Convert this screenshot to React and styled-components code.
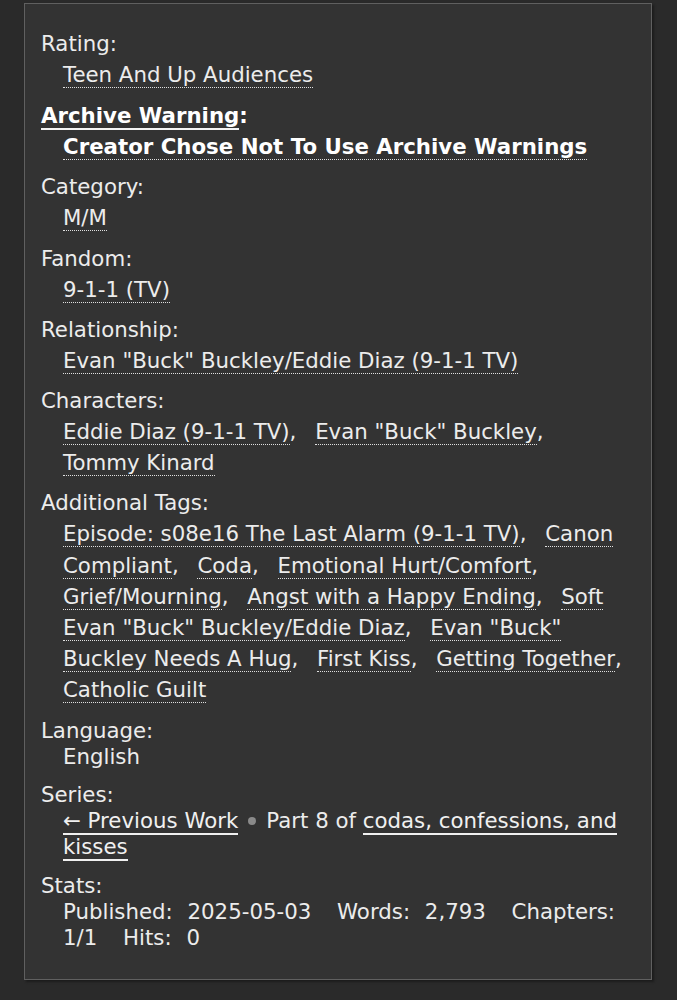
import React from "react";
import styled, { createGlobalStyle } from "styled-components";

const Global = createGlobalStyle`
  html, body { margin: 0; padding: 0; background: #2a2a2a; }
  body { font-family: "DejaVu Sans", Verdana, sans-serif; font-size: 21.3px; color: #ececec; }
`;

const Page = styled.div`
  padding: 3px 24px 22px 24px;
`;

const Panel = styled.dl`
  margin: 0;
  width: 628px;
  box-sizing: border-box;
  background: #333333;
  border: 1px solid #606060;
  box-shadow: 2px 2px 2px #1c1c1c;
  padding: 27px 16px 28px 16px;
  display: flex;
  flex-direction: column;
  gap: 12px;
`;

const Group = styled.div`
  margin-top: ${(p) => p.$extra || 0}px;
`;

const Label = styled.dt`
  line-height: 26px;
  font-weight: ${(p) => (p.$bold ? 700 : 400)};
  color: ${(p) => (p.$bold ? "#ffffff" : "#ececec")};
`;

const LabelText = styled.span`
  border-bottom: 2px solid #f4f4f4;
`;

const Value = styled.dd`
  margin: 0 0 0 22px;
  padding-top: ${(p) => (p.$tags ? "2px" : "0")};
  line-height: ${(p) => (p.$tags ? "31.2px" : "26px")};
  font-weight: ${(p) => (p.$bold ? 700 : 400)};
  color: ${(p) => (p.$bold ? "#ffffff" : "#ececec")};
`;

const Item = styled.span`
  margin-right: 12px;
`;

const TagLink = styled.a`
  color: inherit;
  text-decoration: none;
  border-bottom: 1px dotted #e0e0e0;
`;

const SeriesLink = styled.a`
  color: #f0f0f0;
  text-decoration: none;
  border-bottom: 2px solid #f0f0f0;
`;

const Dot = styled.span`
  display: inline-block;
  width: 8px;
  height: 8px;
  border-radius: 50%;
  background: #8a8a8a;
  margin: 0 10px 0 10px;
  vertical-align: 3px;
`;

const StatName = styled.span`
  margin-right: 8px;
`;

const StatVal = styled.span`
  margin-right: 19px;
`;

function Tags({ items }) {
  return items.map((t, i) =>
    i < items.length - 1 ? (
      <React.Fragment key={i}>
        <Item>
          <TagLink href="#">{t}</TagLink>,
        </Item>{" "}
      </React.Fragment>
    ) : (
      <TagLink key={i} href="#">
        {t}
      </TagLink>
    )
  );
}

const stats = [
  ["Published:", "2025-05-03"],
  ["Words:", "2,793"],
  ["Chapters:", "1/1"],
  ["Hits:", "0"],
];

export default function App() {
  return (
    <>
      <Global />
      <Page>
        <Panel>
          <Group>
            <Label>Rating:</Label>
            <Value $tags>
              <Tags items={["Teen And Up Audiences"]} />
            </Value>
          </Group>
          <Group $extra={1}>
            <Label $bold>
              <LabelText>Archive Warning</LabelText>:
            </Label>
            <Value $tags $bold>
              <Tags items={["Creator Chose Not To Use Archive Warnings"]} />
            </Value>
          </Group>
          <Group>
            <Label>Category:</Label>
            <Value $tags>
              <Tags items={["M/M"]} />
            </Value>
          </Group>
          <Group>
            <Label>Fandom:</Label>
            <Value $tags>
              <Tags items={["9-1-1 (TV)"]} />
            </Value>
          </Group>
          <Group>
            <Label>Relationship:</Label>
            <Value $tags>
              <Tags items={['Evan "Buck" Buckley/Eddie Diaz (9-1-1 TV)']} />
            </Value>
          </Group>
          <Group>
            <Label>Characters:</Label>
            <Value $tags>
              <Tags
                items={[
                  "Eddie Diaz (9-1-1 TV)",
                  'Evan "Buck" Buckley',
                  "Tommy Kinard",
                ]}
              />
            </Value>
          </Group>
          <Group>
            <Label>Additional Tags:</Label>
            <Value $tags>
              <Tags
                items={[
                  "Episode: s08e16 The Last Alarm (9-1-1 TV)",
                  "Canon Compliant",
                  "Coda",
                  "Emotional Hurt/Comfort",
                  "Grief/Mourning",
                  "Angst with a Happy Ending",
                  'Soft Evan "Buck" Buckley/Eddie Diaz',
                  'Evan "Buck" Buckley Needs A Hug',
                  "First Kiss",
                  "Getting Together",
                  "Catholic Guilt",
                ]}
              />
            </Value>
          </Group>
          <Group>
            <Label>Language:</Label>
            <Value>English</Value>
          </Group>
          <Group>
            <Label>Series:</Label>
            <Value>
              <SeriesLink href="#">← Previous Work</SeriesLink>
              <Dot />
              Part 8 of{" "}
              <SeriesLink href="#">codas, confessions, and kisses</SeriesLink>
            </Value>
          </Group>
          <Group $extra={1}>
            <Label>Stats:</Label>
            <Value>
              {stats.map(([n, v], i) => (
                <React.Fragment key={n}>
                  <StatName>{n}</StatName> <StatVal>{v}</StatVal>
                  {i < stats.length - 1 ? " " : null}
                </React.Fragment>
              ))}
            </Value>
          </Group>
        </Panel>
      </Page>
    </>
  );
}
